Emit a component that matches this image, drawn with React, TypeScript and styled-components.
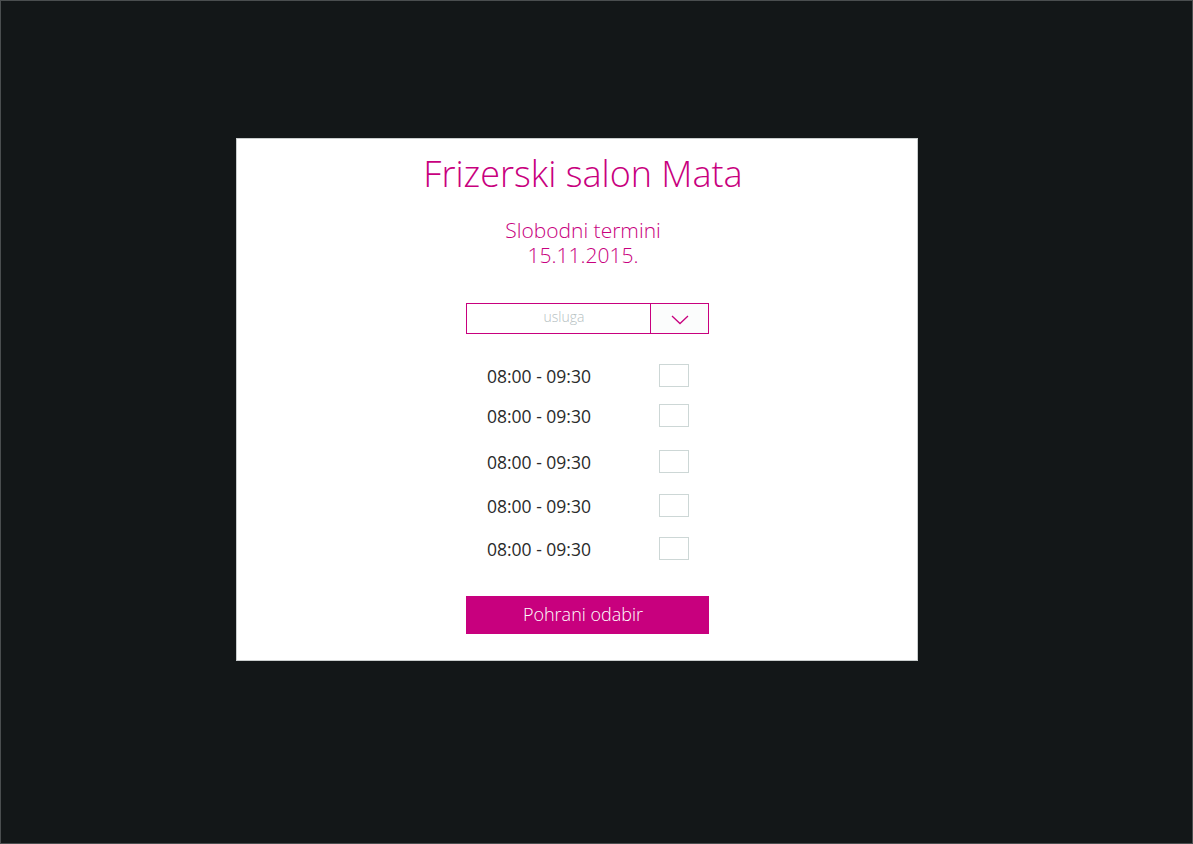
import React from "react";
import styled, { createGlobalStyle } from "styled-components";

const Global = createGlobalStyle`
  html, body { margin: 0; padding: 0; background: #131718; }
  body { font-family: "Open Sans", "Liberation Sans", sans-serif; }
  * { box-sizing: border-box; }
`;

const Page = styled.div`
  width: 1193px;
  height: 844px;
  background: #131718;
  border: 1px solid #4a4e4f;
  display: flex;
  justify-content: flex-start;
  align-items: flex-start;
  padding: 137px 0 0 235px;
`;

const Card = styled.div`
  width: 682px;
  height: 523px;
  background: #ffffff;
  border: 1px solid #c9cdcd;
  display: flex;
  flex-direction: column;
  align-items: center;
  padding: 11px 0 0 12px;
`;

const Title = styled.h1`
  margin: 0;
  font-family: "Open Sans", sans-serif;
  font-weight: 300;
  font-size: 36px;
  line-height: 48px;
  color: #c8007e;
`;

const Subtitle = styled.div`
  margin-top: 20px;
  display: flex;
  flex-direction: column;
  align-items: center;
  font-family: "Open Sans", sans-serif;
  font-weight: 300;
  font-size: 21px;
  color: #c8007e;
`;

const SubLine = styled.span`
  display: block;
  height: 25px;
  line-height: 25px;
`;

const Select = styled.div`
  margin-top: 35px;
  margin-left: 9px;
  width: 243px;
  height: 31px;
  border: 1px solid #c8007e;
  display: flex;
`;

const SelectText = styled.div`
  flex: 1;
  display: flex;
  align-items: center;
  justify-content: center;
  font-family: "Open Sans", sans-serif;
  font-weight: 300;
  font-size: 14px;
  color: #b5c0bf;
  padding: 0 0 5px 11px;
`;

const SelectButton = styled.div`
  width: 58px;
  border-left: 1px solid #c8007e;
  background: #fbfcfc;
  display: flex;
  align-items: center;
  justify-content: center;
  padding-top: 3px;
`;

const Slots = styled.div`
  margin-top: 29px;
  margin-left: 9px;
  display: flex;
  flex-direction: column;
`;

const Row = styled.div<{ $gap: number }>`
  display: flex;
  align-items: center;
  width: 243px;
  height: 24px;
  margin-top: ${(p) => p.$gap}px;
  padding-left: 21px;
`;

const Time = styled.span`
  width: 172px;
  font-family: "Open Sans", sans-serif;
  font-size: 17.5px;
  color: #2a2a2a;
  position: relative;
  top: 1px;
`;

const Box = styled.span`
  width: 30px;
  height: 23px;
  border: 1.5px solid #cdd7d6;
  background: #fff;
`;

const SaveButton = styled.button`
  margin-top: 36px;
  margin-left: 9px;
  width: 243px;
  height: 38px;
  border: none;
  background: #c8007e;
  color: #ffffff;
  font-family: "Open Sans", sans-serif;
  font-weight: 300;
  font-size: 18px;
  padding: 0 9px 2px 0;
  cursor: pointer;
`;

const slots = [
  { t: "08:00 - 09:30", gap: 0 },
  { t: "08:00 - 09:30", gap: 16 },
  { t: "08:00 - 09:30", gap: 22 },
  { t: "08:00 - 09:30", gap: 20 },
  { t: "08:00 - 09:30", gap: 19 },
];

export default function App() {
  return (
    <>
      <Global />
      <Page>
        <Card>
          <Title>Frizerski salon Mata</Title>
          <Subtitle>
            <SubLine>Slobodni termini</SubLine>
            <SubLine>15.11.2015.</SubLine>
          </Subtitle>
          <Select>
            <SelectText>usluga</SelectText>
            <SelectButton>
              <svg width="18" height="10" viewBox="0 0 18 10">
                <path d="M1 1 L9 8.5 L17 1" fill="none" stroke="#c8007e" strokeWidth="1.3" />
              </svg>
            </SelectButton>
          </Select>
          <Slots>
            {slots.map((s, i) => (
              <Row key={i} $gap={s.gap}>
                <Time>{s.t}</Time>
                <Box />
              </Row>
            ))}
          </Slots>
          <SaveButton>Pohrani odabir</SaveButton>
        </Card>
      </Page>
    </>
  );
}
